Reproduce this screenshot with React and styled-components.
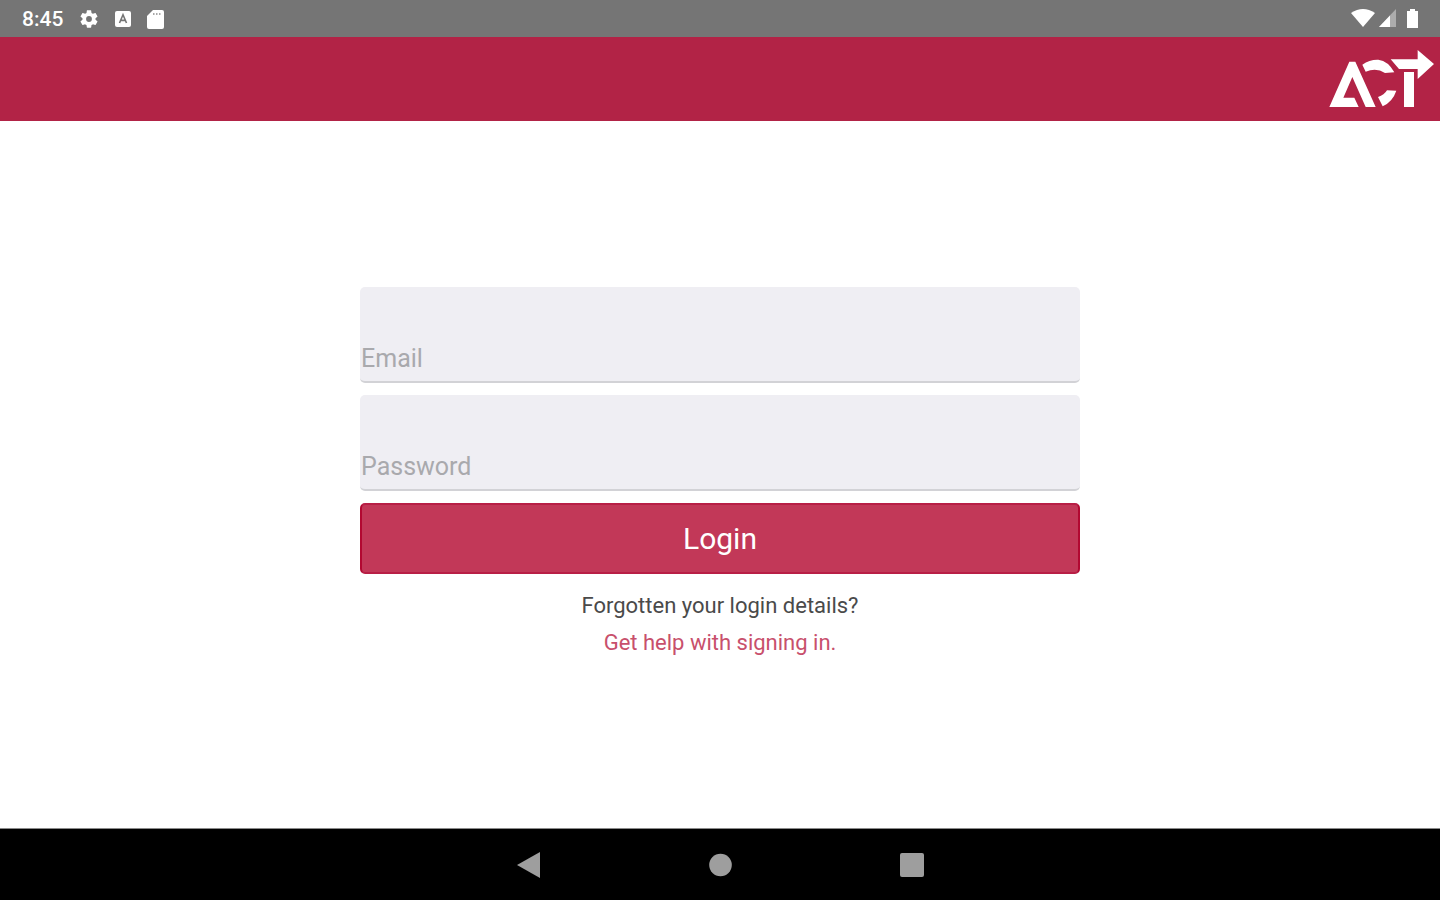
import styled, { createGlobalStyle } from "styled-components";

const GlobalStyle = createGlobalStyle`
  *, *::before, *::after {
    box-sizing: border-box;
  }

  body {
    margin: 0;
    background: #fff;
    font-family: Roboto, "Liberation Sans", sans-serif;
  }
`;

const Screen = styled.div`
  display: flex;
  flex-direction: column;
  min-height: 100vh;
`;

const StatusBar = styled.div`
  display: flex;
  align-items: center;
  justify-content: space-between;
  height: 37px;
  padding: 0 20px 0 22px;
  background: #757575;
  color: #fff;
`;

const StatusGroup = styled.div`
  display: flex;
  align-items: center;
  gap: ${({ $gap }) => $gap}px;

  svg {
    display: block;
    fill: #fff;
  }
`;

const Clock = styled.span`
  font-size: 21px;
  font-weight: 500;
  line-height: 24px;
`;

const Header = styled.header`
  display: flex;
  align-items: center;
  justify-content: flex-end;
  height: 84px;
  padding: 0 6px;
  background: #b22346;
`;

const Main = styled.main`
  flex: 1;
  display: flex;
  flex-direction: column;
  align-items: center;
  justify-content: center;
  padding: 24px 0;
`;

const LoginForm = styled.form`
  display: flex;
  flex-direction: column;
  gap: 12px;
  width: 50%;
`;

const Field = styled.div`
  position: relative;
`;

const TextInput = styled.input`
  display: block;
  width: 100%;
  height: 96px;
  padding: 48px 0 0 1px;
  border: 0;
  border-bottom: 2px solid #d2d2d6;
  border-radius: 5px;
  background: #efeef3;
  color: #333;
  font-family: inherit;
  font-size: 25px;
  outline: none;
`;

/* sits over the input and gives way once something is typed */
const FieldLabel = styled.label`
  position: absolute;
  left: 1px;
  bottom: 8px;
  color: #a9a9ad;
  font-size: 25px;
  line-height: 32px;
  pointer-events: none;

  ${TextInput}:not(:placeholder-shown) + & {
    visibility: hidden;
  }
`;

const LoginButton = styled.button`
  height: 71px;
  border: 2px solid #b81f46;
  border-left-color: #b20831;
  border-right-color: #b20831;
  border-radius: 5px;
  background: #c23858;
  color: #fff;
  font-family: inherit;
  font-size: 30px;
  cursor: pointer;
`;

const Help = styled.div`
  display: flex;
  flex-direction: column;
  align-items: center;
  padding: 13px 0 1px;
  font-size: 22px;
  line-height: 37px;
  color: #4a4a4a;
`;

const HelpLink = styled.a`
  color: #c8506c;
  text-decoration: none;
`;

const NavBar = styled.nav`
  display: flex;
  align-items: center;
  justify-content: center;
  gap: 144px;
  height: 72px;
  border-top: 1px solid #8a8a8a;
  background: #000;
`;

const NavButton = styled.button`
  display: flex;
  align-items: center;
  justify-content: center;
  width: 48px;
  height: 48px;
  padding: 0;
  border: 0;
  background: none;

  svg {
    fill: #9e9e9e;
  }
`;

const Logo = () => (
  <svg width="105" height="58" viewBox="60 150 315 174" fill="#fff" role="img" aria-label="ACT">
    <path d="M61 321 L121 185 H139 L200 321 H170 L130 231 L103 293 H136 L149 321 Z" />
    <path d="M160 194 Q182 178 208 179 Q238 183 256 217 L228 219 Q202 201 170 215 Z" />
    <path d="M207 291 L221 319 Q251 305 262 272 L234 271 Q226 285 207 291 Z" />
    <path d="M245 178 H326 V150 L375 192 L326 237 V207 H270 Z" />
    <path d="M285 216 H315 V321 H285 Z" />
  </svg>
);

const App = () => (
  <Screen>
    <GlobalStyle />
    <StatusBar>
      <StatusGroup $gap={16}>
        <Clock>8:45</Clock>
        <svg width="20" height="20" viewBox="1 1 22 22">
          <path d="M19.14 12.94c.04-.3.06-.61.06-.94 0-.32-.02-.64-.07-.94l2.03-1.58c.18-.14.23-.41.12-.61l-1.92-3.32c-.12-.22-.37-.29-.59-.22l-2.39.96c-.5-.38-1.03-.7-1.62-.94l-.36-2.54c-.04-.24-.24-.41-.48-.41h-3.84c-.24 0-.43.17-.47.41l-.36 2.54c-.59.24-1.13.57-1.62.94l-2.39-.96c-.22-.08-.47 0-.59.22L2.74 8.87c-.12.21-.08.47.12.61l2.03 1.58c-.05.3-.09.63-.09.94s.02.64.07.94l-2.03 1.58c-.18.14-.23.41-.12.61l1.92 3.32c.12.22.37.29.59.22l2.39-.96c.5.38 1.03.7 1.62.94l.36 2.54c.05.24.24.41.48.41h3.84c.24 0 .44-.17.47-.41l.36-2.54c.59-.24 1.13-.56 1.62-.94l2.39.96c.22.08.47 0 .59-.22l1.92-3.32c.12-.22.07-.47-.12-.61l-2.01-1.58zM12 15.2a3.2 3.2 0 1 1 0-6.4 3.2 3.2 0 0 1 0 6.4z" />
        </svg>
        <svg width="16" height="16" viewBox="0 0 16 16">
          <rect width="16" height="16" rx="2" />
          <path d="M4.5 12 L8 3.8 L11.5 12 M6 9.4 H10" style={{ fill: "none" }} stroke="#757575" strokeWidth="1.6" />
        </svg>
        <svg width="17" height="20" viewBox="0 0 17 20">
          <path d="M6 1 H15 Q17 1 17 3 V18 Q17 20 15 20 H2 Q0 20 0 18 V7 Z" />
          <path d="M6 4 H7.5 V6 H6 Z M9 4 H10.5 V6 H9 Z M12 4 H13.5 V6 H12 Z" style={{ fill: "#a8a8a8" }} />
        </svg>
      </StatusGroup>
      <StatusGroup $gap={4}>
        <svg width="24" height="20" viewBox="0 0 24 20">
          <path d="M0 4 Q12 -4 24 4 L12 18 Z" />
        </svg>
        <svg width="17" height="20" viewBox="0 0 17 20">
          <path d="M17 0 V18 H0 Z" opacity="0.4" />
          <path d="M11 6.4 V18 H0 Z" />
        </svg>
        <svg width="20" height="22" viewBox="0 0 20 22">
          <path d="M7 3 H10 V1 H15 V3 H18 V20 H7 Z" />
        </svg>
      </StatusGroup>
    </StatusBar>
    <Header>
      <Logo />
    </Header>
    <Main>
      <LoginForm onSubmit={(e) => e.preventDefault()}>
        <Field>
          <TextInput id="email" type="email" placeholder=" " />
          <FieldLabel htmlFor="email">Email</FieldLabel>
        </Field>
        <Field>
          <TextInput id="password" type="password" placeholder=" " />
          <FieldLabel htmlFor="password">Password</FieldLabel>
        </Field>
        <LoginButton type="submit">Login</LoginButton>
      </LoginForm>
      <Help>
        <span>Forgotten your login details?</span>
        <HelpLink href="#help">Get help with signing in.</HelpLink>
      </Help>
    </Main>
    <NavBar>
      <NavButton type="button" aria-label="Back">
        <svg width="24" height="26" viewBox="0 0 24 26">
          <path d="M1 13 L24 0 V26 Z" />
        </svg>
      </NavButton>
      <NavButton type="button" aria-label="Home">
        <svg width="24" height="24" viewBox="0 0 24 24">
          <circle cx="12.5" cy="12" r="11.3" />
        </svg>
      </NavButton>
      <NavButton type="button" aria-label="Recent apps">
        <svg width="24" height="24" viewBox="0 0 24 24">
          <rect width="24" height="24" rx="2" />
        </svg>
      </NavButton>
    </NavBar>
  </Screen>
);

export default App;
